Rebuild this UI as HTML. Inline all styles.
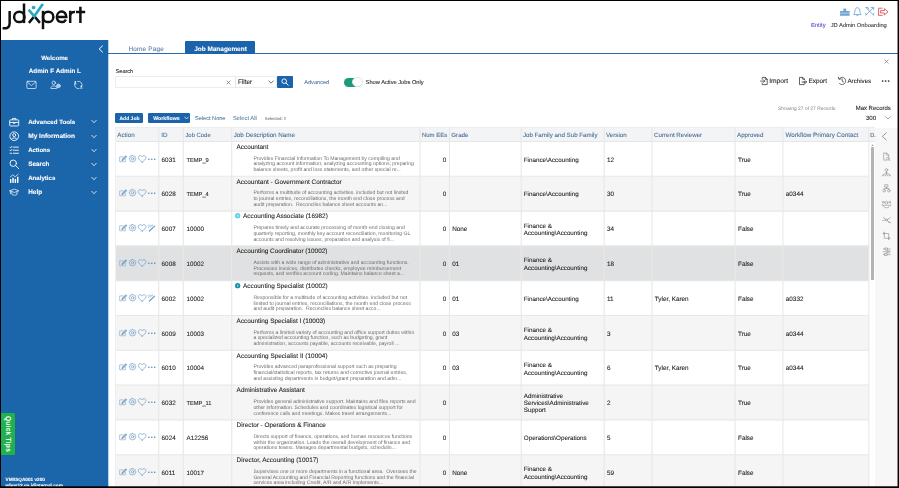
<!DOCTYPE html>
<html><head><meta charset="utf-8"><title>JDXpert - Job Management</title>
<style>
*{box-sizing:border-box;margin:0;padding:0}
html,body{width:899px;height:488px;overflow:hidden;background:#fff;font-family:"Liberation Sans",sans-serif;color:#222}
#app{position:absolute;left:0;top:0;width:899px;height:488px;overflow:hidden;background:#fff}
.t{position:absolute;white-space:nowrap;line-height:1;display:block}
#bt,#bl,#br,#bb{position:absolute;background:#000;z-index:50}
#bt{left:0;top:0;width:899px;height:1px}
#bl{left:0;top:0;width:1px;height:488px}
#br{left:898px;top:0;width:1px;height:488px}
#br2{position:absolute;z-index:50;left:897px;top:0;width:1px;height:488px;background:rgba(0,0,0,.45)}
#bb{left:0;top:487px;width:899px;height:1px}
#bb2{position:absolute;z-index:50;left:0;top:486px;width:899px;height:1px;background:rgba(0,0,0,.72)}
#side{position:absolute;left:1px;top:40px;width:107px;height:448px;background:#1b65ab}
#sideaa{position:absolute;left:108px;top:40px;width:1px;height:448px;background:#1b65ab;opacity:.3}
.mi{position:absolute;overflow:visible}
#qt{position:absolute;left:0.3px;top:373px;width:13.5px;height:42px;background:#22b04c;border-radius:0 1px 1px 0}
#qt span{position:absolute;left:6.9px;top:21px;transform:translate(-50%,-50%) rotate(90deg);color:#fff;font-weight:bold;font-size:6.6px;white-space:nowrap;line-height:1;letter-spacing:0.25px}
#tabline{position:absolute;left:108px;top:53px;width:790px;height:1px;background:#2b6cb0}
#jm{position:absolute;left:185.4px;top:41.1px;width:70px;height:12.6px;background:#1b63aa;border-radius:1px 1px 0 0}
.btn{position:absolute;background:#1b63aa;border-radius:1.2px}
#sbox{position:absolute;left:115.3px;top:75.7px;width:161.4px;height:12.1px;border:1px solid #ececec;border-radius:1px;background:#fff}
#sbox i{position:absolute;left:119px;top:0;width:0.6px;height:11px;background:#e4e4e4}
#sbtn{position:absolute;left:277px;top:75.7px;width:15.7px;height:12.3px;background:#1b63aa;border-radius:1px}
#tog{position:absolute;left:343.8px;top:77.6px;width:18.3px;height:9.3px;border-radius:4.7px;background:#1b9a7c}
#tog i{position:absolute;left:8.7px;top:-0.4px;width:10.1px;height:10.1px;border-radius:50%;background:#fff;border:0.7px solid #dfe6e4}
#hdr{position:absolute;left:115.3px;top:126.9px;width:760.1px;height:15px;background:#f3f4f6;border-top:1px solid #ececec;border-bottom:1px solid #e6e6e6}
.vs{position:absolute;top:0;bottom:0;width:1px;background:#eaeaea}
#rows{position:absolute;left:115.3px;top:0;width:753.7px;height:488px}
.row{position:absolute;left:0;width:753.9px;overflow:hidden}
#grid{position:absolute;left:0;top:126.9px;z-index:3}
.ai{position:absolute;overflow:visible}
.dot{position:absolute;width:4.4px;height:4.4px;border-radius:50%}
#tl{position:absolute;left:115px;top:126.9px;width:1px;height:362px;background:#efefef}
#scroll{position:absolute;left:869.8px;top:141.7px;width:5.6px;height:346px;background:#fff}
#scroll i{position:absolute;left:1.1px;top:5.6px;width:3.2px;height:132.3px;background:#b4b4b4;border-radius:0.5px}
#rp{position:absolute;left:875.4px;top:127.5px;width:22.4px;height:361px;background:#f7f7f7}
svg{display:block}
#txt{position:absolute;left:0;top:0;font-family:"Liberation Sans",sans-serif;fill:#222;stroke:#222;stroke-width:0.08px;text-rendering:geometricPrecision;will-change:transform;}
</style></head><body>
<div id="app">
<svg width="0" height="0" style="position:absolute">
<defs>
<g id="acts" fill="none" stroke="#6f9cc4" stroke-width="0.7" stroke-linecap="round" stroke-linejoin="round">
 <path d="M4.3 1.9 H0.65 V6.75 H6.4 V4.3" stroke="#8fb0cc"/><path d="M2.9 5.4 L3.3 4.1 L6.9 0.8 L7.8 1.7 L4.3 5.0 Z" stroke="#5f92c2" fill="#5f92c2" fill-opacity=".6"/>
 <path d="M13.22 0.37 L13.88 0.37 L14.35 1.12 L14.85 1.32 L15.71 1.12 L16.18 1.59 L15.98 2.45 L16.18 2.95 L16.93 3.42 L16.93 4.08 L16.18 4.55 L15.98 5.05 L16.18 5.91 L15.71 6.38 L14.85 6.18 L14.35 6.38 L13.88 7.13 L13.22 7.13 L12.75 6.38 L12.25 6.18 L11.39 6.38 L10.92 5.91 L11.12 5.05 L10.92 4.55 L10.17 4.08 L10.17 3.42 L10.92 2.95 L11.12 2.45 L10.92 1.59 L11.39 1.12 L12.25 1.32 L12.75 1.12 Z"/><circle cx="13.55" cy="3.75" r="1.2"/>
 <path d="M23.15 7.15 C21.2 5.6 19.35 4.3 19.35 2.6 C19.35 1.4 20.3 0.65 21.25 0.65 C22.05 0.65 22.8 1.1 23.15 1.8 C23.5 1.1 24.25 0.65 25.05 0.65 C26 0.65 26.95 1.4 26.95 2.6 C26.95 4.3 25.1 5.6 23.15 7.15 Z"/>
</g>
<g id="dots" fill="#4f7fae"><circle cx="29.9" cy="4.3" r="0.75"/><circle cx="32.8" cy="4.3" r="0.75"/><circle cx="35.7" cy="4.3" r="0.75"/></g>
<g id="act4" fill="none" stroke="#6f9cc4" stroke-linecap="round" stroke-linejoin="round">
 <path d="M30.4 7 L35.7 2.1" stroke-width="1.2"/><path d="M29 1.4 L30.6 3 M30.4 0.9 L31.6 2.4 M32 1 L32.6 2 M33.4 0.9 L33.2 1.9 M29.2 3.2 L30 3.8" stroke-width="0.6"/>
</g>
<g id="ic-brief" fill="none" stroke="#fff" stroke-width="1.85" stroke-linejoin="round"><rect x="1.5" y="6" width="19" height="13" rx="1.5"/><path d="M7.5 6 V3 H14.5 V6 M1.5 11.5 H20.5 M9.5 11.5 V13.5 H12.5 V11.5"/></g>
<g id="ic-user" fill="none" stroke="#fff" stroke-width="1.85"><circle cx="11" cy="11" r="9.2"/><circle cx="11" cy="8.6" r="3.2"/><path d="M5 17.6 C6 13.5 16 13.5 17 17.6"/></g>
<g id="ic-list" fill="none" stroke="#fff" stroke-width="1.85" stroke-linecap="round"><path d="M9 4.5 H20 M9 11 H20 M9 17.5 H20 M2 4.5 L3.5 6 L6 3 M2 11 L3.5 12.5 L6 9.5 M2.5 17.5 H5.5"/></g>
<g id="ic-search" fill="none" stroke="#fff" stroke-width="1.9" stroke-linecap="round"><circle cx="9" cy="9" r="6.8"/><path d="M14 14 L20.5 20.5"/></g>
<g id="ic-chart" fill="#fff" stroke="none"><rect x="2" y="13" width="3" height="8"/><rect x="7" y="10" width="3" height="11"/><rect x="12" y="12.5" width="3" height="8.5"/><rect x="17" y="8" width="3" height="13"/><path d="M2 9 L8 4 L13 8 L20 2" fill="none" stroke="#fff" stroke-width="1.5" stroke-linejoin="round"/></g>
<g id="ic-help" fill="none" stroke="#fff" stroke-width="1.5" stroke-linejoin="round"><path d="M1 8 L11.5 4.5 L21 8 L11.5 11.5 Z M6 10 V15.5 C8 18 15 18 17 15.5 V10 M3 9 V15"/></g>
</defs></svg>

<!-- logo -->
<svg style="position:absolute;left:0;top:0" width="90" height="36" viewBox="0 0 90 36">
 <g fill="none" stroke="#111" stroke-width="2.5">
  <path d="M9.65 11 V23.6 C9.65 27.6 6.8 28.8 2.6 28.1"/>
  <circle cx="19.3" cy="16.9" r="5.2"/><path d="M24 3.5 V23.1"/>
  <path d="M43 10.8 V29.2"/><circle cx="48.2" cy="16.9" r="5.2"/>
  <path d="M57.2 17 H66.3 C66.3 9.4 56.9 10.2 56.9 16.9 C56.9 22.6 63.6 23.6 66 19.6"/>
  <path d="M70.2 10.8 V23.1 M70.2 16 C70.2 12.8 72.5 11.6 75 12"/>
  <path d="M80.4 6.8 V23.1 M76 12 H85.2"/>
  <path d="M28.9 22.9 L34.4 16.2 L39.9 22.9" stroke-width="2.5"/>
 </g>
 <path d="M28.6 9.6 L34.3 16.3 L42.8 3.9" fill="none" stroke="#2aa9c0" stroke-width="2.7"/>
 <circle cx="33.6" cy="7.5" r="1.85" fill="#2aa9c0"/>
</svg>

<!-- top right -->
<svg style="position:absolute;left:838px;top:6px" width="52" height="12" viewBox="0 0 52 12">
 <g fill="#6fa3d4"><rect x="2" y="5" width="9.6" height="4.8" rx="0.4"/><rect x="5.4" y="2.6" width="2.8" height="2.4"/></g>
 <path d="M2 7.2 H11.6" stroke="#fff" stroke-width="0.5"/>
 <g fill="none" stroke="#6fa3d4" stroke-width="0.85" stroke-linejoin="round" stroke-linecap="round">
  <path d="M16 8.3 C17 7.2 16.6 5.4 17.1 3.9 C17.6 2.4 18.5 1.6 19.4 1.6 C20.3 1.6 21.2 2.4 21.7 3.9 C22.2 5.4 21.8 7.2 22.8 8.3 Z M18.5 9.2 C18.8 10 20 10 20.3 9.2"/>
  <path d="M28 1.6 L35.4 9 M35.4 1.6 L28 9 M28 1.6 L30 1.4 L30.4 3.2 M33.2 1.4 L35.6 1.4 L35.6 3.6 M28 9 L27.6 7.4 M35.4 9 L35.8 7.4"/>
 </g>
 <g fill="none" stroke="#e0525a" stroke-width="0.9" stroke-linejoin="round" stroke-linecap="round">
  <path d="M44 2.2 H40.6 V9.4 H44"/><path d="M43 4.6 H46.4 V2.6 L50 5.8 L46.4 9 V7 H43 Z"/>
 </g>
</svg>


<!-- sidebar -->
<div id="sideaa"></div>
<div id="side">
 <svg class="mi" style="left:96.8px;top:4.6px" width="6" height="8" viewBox="0 0 6 8"><path d="M4.8 0.6 L1.2 4 L4.8 7.4" fill="none" stroke="#fff" stroke-width="1"/></svg>
 
 <svg class="mi" style="left:24.5px;top:40.2px" width="60" height="10" viewBox="0 0 60 10" fill="none" stroke="#dbe9f6" stroke-width="0.8" stroke-linejoin="round" stroke-linecap="round">
  <rect x="0.9" y="1.3" width="9.2" height="7.2" rx="0.9"/><path d="M1.1 1.8 L5.5 5.6 L9.9 1.8"/>
  <circle cx="27.75" cy="2.8" r="1.7"/><path d="M24.8 8.1 C24.8 5 30.7 5 30.7 8.1 Z"/><circle cx="32.4" cy="5.9" r="1.8" fill="#9fc0e2" stroke="#dbe9f6"/>
  <path d="M51.76 1.36 A3.7 3.7 0 0 1 55.88 6.27 M53.04 8.64 A3.7 3.7 0 0 1 48.92 3.73"/>
  <g fill="#dbe9f6" stroke="none"><circle cx="49.3" cy="2" r="0.9"/><path d="M47.9 4.2 C47.9 2.8 50.7 2.8 50.7 4.2 Z"/><circle cx="55.3" cy="6.3" r="0.9"/><path d="M53.9 8.5 C53.9 7.1 56.7 7.1 56.7 8.5 Z"/></g>
 </svg>
 <svg class="mi" style="left:7.9px;top:76.6px" width="10.4" height="10.4" viewBox="0 0 22 22"><use href="#ic-brief"/></svg><svg class="mi" style="left:90.0px;top:79.4px" width="6" height="5" viewBox="0 0 12 10"><path d="M1 2 L6 7.5 L11 2" fill="none" stroke="#fff" stroke-width="1.5"/></svg><svg class="mi" style="left:7.9px;top:90.7px" width="10.4" height="10.4" viewBox="0 0 22 22"><use href="#ic-user"/></svg><svg class="mi" style="left:90.0px;top:93.5px" width="6" height="5" viewBox="0 0 12 10"><path d="M1 2 L6 7.5 L11 2" fill="none" stroke="#fff" stroke-width="1.5"/></svg><svg class="mi" style="left:7.9px;top:104.7px" width="10.4" height="10.4" viewBox="0 0 22 22"><use href="#ic-list"/></svg><svg class="mi" style="left:90.0px;top:107.5px" width="6" height="5" viewBox="0 0 12 10"><path d="M1 2 L6 7.5 L11 2" fill="none" stroke="#fff" stroke-width="1.5"/></svg><svg class="mi" style="left:7.9px;top:118.8px" width="10.4" height="10.4" viewBox="0 0 22 22"><use href="#ic-search"/></svg><svg class="mi" style="left:90.0px;top:121.6px" width="6" height="5" viewBox="0 0 12 10"><path d="M1 2 L6 7.5 L11 2" fill="none" stroke="#fff" stroke-width="1.5"/></svg><svg class="mi" style="left:7.9px;top:132.9px" width="10.4" height="10.4" viewBox="0 0 22 22"><use href="#ic-chart"/></svg><svg class="mi" style="left:90.0px;top:135.7px" width="6" height="5" viewBox="0 0 12 10"><path d="M1 2 L6 7.5 L11 2" fill="none" stroke="#fff" stroke-width="1.5"/></svg><svg class="mi" style="left:7.9px;top:146.9px" width="10.4" height="10.4" viewBox="0 0 22 22"><use href="#ic-help"/></svg><svg class="mi" style="left:90.0px;top:149.7px" width="6" height="5" viewBox="0 0 12 10"><path d="M1 2 L6 7.5 L11 2" fill="none" stroke="#fff" stroke-width="1.5"/></svg>
 <div id="qt"><span>Quick Tips</span></div>
 
</div>

<!-- tabs -->
<div id="tabline"></div>

<div id="jm"></div>
<svg style="position:absolute;left:884.2px;top:58.6px" width="5" height="5" viewBox="0 0 5 5"><path d="M0.5 0.5 L4.5 4.5 M4.5 0.5 L0.5 4.5" stroke="#666" stroke-width="0.6"/></svg>

<!-- toolbar -->
<div id="sbox"><i></i>
 <svg style="position:absolute;left:109.8px;top:3.4px" width="5" height="5" viewBox="0 0 5 5"><path d="M0.6 0.6 L4.4 4.4 M4.4 0.6 L0.6 4.4" stroke="#555" stroke-width="0.6"/></svg>
 <svg style="position:absolute;left:151.6px;top:3.6px" width="6" height="4" viewBox="0 0 6 4"><path d="M0.5 0.6 L3 3.2 L5.5 0.6" fill="none" stroke="#333" stroke-width="0.7"/></svg>
</div>
<div id="sbtn"><svg style="position:absolute;left:4.2px;top:2.4px" width="8" height="8" viewBox="0 0 8 8"><circle cx="3.2" cy="3.2" r="2.3" fill="none" stroke="#fff" stroke-width="0.9"/><path d="M5 5 L7.2 7.2" stroke="#fff" stroke-width="1" stroke-linecap="round"/></svg></div>
<div id="tog"><i></i></div>
<svg style="position:absolute;left:759px;top:76px" width="135" height="10" viewBox="0 0 135 10" fill="none" stroke="#3c3c3c" stroke-width="0.8" stroke-linejoin="round" stroke-linecap="round">
 <path d="M3.2 3.2 V1.4 H6.4 L8.2 3.2 V8.6 H3.2 V7 M6.3 1.4 V3.3 H8.2 M1.5 5.1 H5.8 M4.5 3.8 L5.8 5.1 L4.5 6.4"/>
 <path d="M45.2 5.4 V8.6 H40.5 V1.4 H43.8 L45.5 3.1 V3.6 M43.7 1.4 V3.2 H45.5 M43 6 H47.6 M46.3 4.7 L47.6 6 L46.3 7.3" />
 <path d="M80.2 3 C81.6 0.4 86 0.6 86.6 4.4 C87 8 83 9.8 80.6 7.6 M79.4 1.2 L80 3.2 L82 2.8 M83.2 3 V5.2 L84.6 6"/>
 <g fill="#222" stroke="none"><circle cx="123.6" cy="5" r="0.85"/><circle cx="126.6" cy="5" r="0.85"/><circle cx="129.6" cy="5" r="0.85"/></g>
</svg>
<svg style="position:absolute;left:884.6px;top:116px" width="6" height="4" viewBox="0 0 6 4"><path d="M0.5 0.6 L3 3 L5.5 0.6" fill="none" stroke="#666" stroke-width="0.6"/></svg>

<div class="btn" style="left:115.3px;top:112.6px;width:27.9px;height:10.2px"></div><div class="btn" style="left:148.2px;top:112.6px;width:41.7px;height:10.2px"><svg style="position:absolute;left:35.6px;top:3.9px" width="5" height="4" viewBox="0 0 10 8"><path d="M1 1.5 L5 6 L9 1.5" fill="none" stroke="#fff" stroke-width="1.4"/></svg></div>

<!-- grid -->
<div id="rows">
<div class="row" style="top:141.9px;height:34.8px;background:#fff"><svg class="ai" style="left:3.5px;top:12.7px" width="36" height="9" viewBox="0 0 36 9"><use href="#acts"/><use href="#dots"/></svg></div>
<div class="row" style="top:176.7px;height:34.8px;background:#f5f5f5"><svg class="ai" style="left:3.5px;top:12.7px" width="36" height="9" viewBox="0 0 36 9"><use href="#acts"/><use href="#dots"/></svg></div>
<div class="row" style="top:211.5px;height:34.8px;background:#fff"><svg class="ai" style="left:3.5px;top:12.7px" width="36" height="9" viewBox="0 0 36 9"><use href="#acts"/><use href="#act4"/></svg><svg class="ai" style="left:119.65px;top:1.8px" width="5.3" height="5.3" viewBox="0 0 5.3 5.3"><circle cx="2.65" cy="2.65" r="2.65" fill="#5fd0e6"/><circle cx="2.65" cy="2.65" r="1.1" fill="#a5e6f2"/></svg></div>
<div class="row" style="top:246.3px;height:34.8px;background:#e0e1e2"><svg class="ai" style="left:3.5px;top:12.7px" width="36" height="9" viewBox="0 0 36 9"><use href="#acts"/><use href="#dots"/></svg></div>
<div class="row" style="top:281.1px;height:34.8px;background:#fff"><svg class="ai" style="left:3.5px;top:12.7px" width="36" height="9" viewBox="0 0 36 9"><use href="#acts"/><use href="#act4"/></svg><svg class="ai" style="left:119.65px;top:1.8px" width="5.3" height="5.3" viewBox="0 0 5.3 5.3"><circle cx="2.65" cy="2.65" r="2.65" fill="#1e8fa8"/><path d="M2 1.4 L3.9 2.65 L2 3.9 Z" fill="#8fd6ee"/></svg></div>
<div class="row" style="top:315.9px;height:34.8px;background:#f5f5f5"><svg class="ai" style="left:3.5px;top:12.7px" width="36" height="9" viewBox="0 0 36 9"><use href="#acts"/><use href="#dots"/></svg></div>
<div class="row" style="top:350.7px;height:34.8px;background:#fff"><svg class="ai" style="left:3.5px;top:12.7px" width="36" height="9" viewBox="0 0 36 9"><use href="#acts"/><use href="#dots"/></svg></div>
<div class="row" style="top:385.5px;height:34.8px;background:#f5f5f5"><svg class="ai" style="left:3.5px;top:12.7px" width="36" height="9" viewBox="0 0 36 9"><use href="#acts"/><use href="#dots"/></svg></div>
<div class="row" style="top:420.3px;height:34.8px;background:#fff"><svg class="ai" style="left:3.5px;top:12.7px" width="36" height="9" viewBox="0 0 36 9"><use href="#acts"/><use href="#dots"/></svg></div>
<div class="row" style="top:455.1px;height:34.8px;background:#f5f5f5"><svg class="ai" style="left:3.5px;top:12.7px" width="36" height="9" viewBox="0 0 36 9"><use href="#acts"/><use href="#dots"/></svg></div><svg id="grid" width="760" height="362" viewBox="115.3 126.9 760 362" fill="none" stroke="#e8e8e8" stroke-width="1.1"><path d="M159.10 127V488M183.60 127V488M232.00 127V488M420.30 127V488M449.75 127V488M521.50 127V488M604.50 127V488M652.30 127V488M735.40 127V488M783.20 127V488M869.20 127V488M115.3 176.20H869.2M115.3 211.00H869.2M115.3 245.80H869.2M115.3 280.60H869.2M115.3 315.40H869.2M115.3 350.20H869.2M115.3 385.00H869.2M115.3 419.80H869.2M115.3 454.60H869.2M115.3 489.40H869.2"/></svg>
</div>
<div id="hdr"></div>
<div id="tl"></div>
<div id="scroll"><i></i><svg style="position:absolute;left:1.2px;top:2.2px" width="3" height="2.4" viewBox="0 0 3 2.4"><path d="M0.2 2.2 L1.5 0.3 L2.8 2.2 Z" fill="#9a9a9a"/></svg></div>
<div id="rp">
 <svg style="position:absolute;left:0;top:0" width="22.4" height="140" viewBox="0 0 22.4 140" fill="none" stroke="#959595" stroke-width="0.65" stroke-linejoin="round" stroke-linecap="round">
  <path d="M11.3 4.9 L7.3 8.4 L11.3 11.9" stroke="#777" stroke-width="0.75"/>
  <g transform="translate(0.3,28.7)"><path d="M8.4 -3.6 H11.6 L13.4 -1.8 V0.4 M11.4 -3.6 V-1.6 H13.4 M8.4 -3.6 V3.4 H11"/><circle cx="12.6" cy="2" r="1.4"/><path d="M13.6 3 L14.6 4"/></g>
  <g transform="translate(0.3,44.4)"><circle cx="11.2" cy="-2.5" r="1.3"/><path d="M11.2 -1.2 V1 M11.2 -0.2 L7.6 2.8 M11.2 -0.2 L14.8 2.8 M7.2 3.6 L7.6 2.4 L8.8 2.8 M15.2 3.6 L14.8 2.4 L13.6 2.8 M11.2 1 L10 3.6 M11.2 1 L12.4 3.6"/></g>
  <g transform="translate(0.3,60.3)"><rect x="9.8" y="-3.6" width="2.8" height="2.4"/><circle cx="8.8" cy="2.4" r="1.3"/><circle cx="13.6" cy="2.4" r="1.3"/><path d="M11.2 -1.2 V0.2 M8.8 1 V0.2 H13.6 V1"/></g>
  <g transform="translate(0.3,76.2)"><circle cx="11.2" cy="-1.6" r="1.3"/><circle cx="8" cy="-2" r="0.9"/><circle cx="14.4" cy="-2" r="0.9"/><path d="M8.6 1 H13.8 V2.6 C13 4 9.4 4 8.6 2.6 Z M7 0.2 V1.6 M15.4 0.2 V1.6"/></g>
  <g transform="translate(0.3,91.9)"><circle cx="11.2" cy="0" r="1"/><path d="M8 -2.6 L10.4 -0.6 M12 0.6 L14.6 2.8 M14.8 -2 L12.2 -0.4 M7.6 0.6 L10.2 0.2 M13 2.2 L15.2 2.6"/></g>
  <g transform="translate(0.3,107.9)"><path d="M9 -3.6 V2.4 H14.6 M13.4 3.6 V-2.4 H7.8 M13.2 1.2 L14.6 2.4 L13.2 3.6 M9.2 -1.2 L7.8 -2.4 L9.2 -3.6"/></g>
  <g transform="translate(0.3,123.8)"><path d="M8 -2.8 H10 M12.4 -2.8 H15 M8 0 H12 M14 0 H15 M8 2.8 H9.6 M12 2.8 H15"/><rect x="10" y="-3.8" width="2.2" height="2"/><rect x="12" y="-1" width="2" height="2"/><rect x="9.6" y="1.8" width="2.2" height="2"/></g>
 </svg>
</div>

<svg id="txt" width="899" height="488" viewBox="0 0 899 488">
<text x="161.6" y="162" font-size="6.35">6031</text>
<text x="186.5" y="162" font-size="5.72">TEMP_9</text>
<text x="236.6" y="149" font-size="6.40" textLength="31.7">Accountant</text>
<text x="253.4" y="160" font-size="5.12" fill="#6e6e6e" stroke="none">Provides Financial Information To Management by compiling and</text>
<text x="253.4" y="165" font-size="5.12" fill="#6e6e6e" stroke="none">analyzing account information; analyzing accounting options; preparing</text>
<text x="253.4" y="171" font-size="5.12" fill="#6e6e6e" stroke="none">balance sheets, profit and loss statements, and other special re...</text>
<text x="446.3" y="162" font-size="6.35" text-anchor="end">0</text>
<text x="523.8" y="162" font-size="6.26">Finance\Accounting</text>
<text x="607.0" y="162" font-size="6.35">12</text>
<text x="738.0" y="162" font-size="6.35">True</text>
<text x="161.6" y="196" font-size="6.35">6028</text>
<text x="186.5" y="196" font-size="5.72">TEMP_4</text>
<text x="236.6" y="184" font-size="6.40" textLength="105">Accountant - Government Contractor</text>
<text x="253.4" y="194" font-size="5.12" fill="#6e6e6e" stroke="none">Performs a multitude of accounting activities. included but not limited</text>
<text x="253.4" y="200" font-size="5.12" fill="#6e6e6e" stroke="none">to journal entries, reconciliations, the month end close process and</text>
<text x="253.4" y="206" font-size="5.12" fill="#6e6e6e" stroke="none">audit preparation.&#160; Reconciles balance sheet accounts an...</text>
<text x="446.3" y="196" font-size="6.35" text-anchor="end">0</text>
<text x="523.8" y="196" font-size="6.26">Finance\Accounting</text>
<text x="607.0" y="196" font-size="6.35">30</text>
<text x="738.0" y="196" font-size="6.35">True</text>
<text x="785.8" y="196" font-size="6.35">a0344</text>
<text x="161.6" y="231" font-size="6.35">6007</text>
<text x="186.5" y="231" font-size="6.30">10000</text>
<text x="243.1" y="218" font-size="6.40" textLength="84.7">Accounting Associate (16982)</text>
<text x="253.4" y="229" font-size="5.12" fill="#6e6e6e" stroke="none">Prepares timely and accurate processing of month-end closing and</text>
<text x="253.4" y="235" font-size="5.12" fill="#6e6e6e" stroke="none">quarterly reporting, monthly key account reconciliation, monitoring GL</text>
<text x="253.4" y="241" font-size="5.12" fill="#6e6e6e" stroke="none">accounts and resolving issues, preparation and analysis of fi...</text>
<text x="446.3" y="231" font-size="6.35" text-anchor="end">0</text>
<text x="452.2" y="231" font-size="6.35">None</text>
<text x="523.8" y="228" font-size="6.26">Finance &amp;</text>
<text x="523.8" y="235" font-size="6.26">Accounting\Accounting</text>
<text x="607.0" y="231" font-size="6.35">34</text>
<text x="738.0" y="231" font-size="6.35">False</text>
<text x="161.6" y="266" font-size="6.35">6008</text>
<text x="186.5" y="266" font-size="6.30">10002</text>
<text x="236.6" y="253" font-size="6.40" textLength="90.8">Accounting Coordinator (10002)</text>
<text x="253.4" y="264" font-size="5.12" fill="#6e6e6e" stroke="none">Assists with a wide range of administrative and accounting functions.</text>
<text x="253.4" y="270" font-size="5.12" fill="#6e6e6e" stroke="none">Processes invoices, distributes checks, employee reimbursement</text>
<text x="253.4" y="275" font-size="5.12" fill="#6e6e6e" stroke="none">requests, and verifies account coding. Maintains balance sheet a...</text>
<text x="446.3" y="266" font-size="6.35" text-anchor="end">0</text>
<text x="452.2" y="266" font-size="6.35">01</text>
<text x="523.8" y="262" font-size="6.26">Finance &amp;</text>
<text x="523.8" y="270" font-size="6.26">Accounting\Accounting</text>
<text x="607.0" y="266" font-size="6.35">18</text>
<text x="738.0" y="266" font-size="6.35">False</text>
<text x="161.6" y="301" font-size="6.35">6002</text>
<text x="186.5" y="301" font-size="6.30">10002</text>
<text x="243.1" y="288" font-size="6.40" textLength="84.6">Accounting Specialist (10002)</text>
<text x="253.4" y="299" font-size="5.12" fill="#6e6e6e" stroke="none">Responsible for a multitude of accounting activities. included but not</text>
<text x="253.4" y="305" font-size="5.12" fill="#6e6e6e" stroke="none">limited to journal entries, reconciliations, the month end close process</text>
<text x="253.4" y="310" font-size="5.12" fill="#6e6e6e" stroke="none">and audit preparation.&#160; Reconciles balance sheet acco...</text>
<text x="446.3" y="301" font-size="6.35" text-anchor="end">0</text>
<text x="452.2" y="301" font-size="6.35">01</text>
<text x="523.8" y="301" font-size="6.26">Finance\Accounting</text>
<text x="607.0" y="301" font-size="6.35">11</text>
<text x="654.8" y="301" font-size="6.35">Tyler, Karen</text>
<text x="738.0" y="301" font-size="6.35">False</text>
<text x="785.8" y="301" font-size="6.35">a0332</text>
<text x="161.6" y="336" font-size="6.35">6009</text>
<text x="186.5" y="336" font-size="6.30">10003</text>
<text x="236.6" y="323" font-size="6.40" textLength="88.6">Accounting Specialist I (10003)</text>
<text x="253.4" y="334" font-size="5.12" fill="#6e6e6e" stroke="none">Performs a limited variety of accounting and office support duties within</text>
<text x="253.4" y="339" font-size="5.12" fill="#6e6e6e" stroke="none">a specialized accounting function, such as budgeting, grant</text>
<text x="253.4" y="345" font-size="5.12" fill="#6e6e6e" stroke="none">administration, accounts payable, accounts receivable, payroll ...</text>
<text x="446.3" y="336" font-size="6.35" text-anchor="end">0</text>
<text x="452.2" y="336" font-size="6.35">03</text>
<text x="523.8" y="332" font-size="6.26">Finance &amp;</text>
<text x="523.8" y="340" font-size="6.26">Accounting\Accounting</text>
<text x="607.0" y="336" font-size="6.35">3</text>
<text x="738.0" y="336" font-size="6.35">True</text>
<text x="785.8" y="336" font-size="6.35">a0344</text>
<text x="161.6" y="370" font-size="6.35">6010</text>
<text x="186.5" y="370" font-size="6.30">10004</text>
<text x="236.6" y="358" font-size="6.40" textLength="91.0">Accounting Specialist II (10004)</text>
<text x="253.4" y="368" font-size="5.12" fill="#6e6e6e" stroke="none">Provides advanced paraprofessional support such as preparing</text>
<text x="253.4" y="374" font-size="5.12" fill="#6e6e6e" stroke="none">financial/statistical reports, tax returns and corrective journal entries,</text>
<text x="253.4" y="380" font-size="5.12" fill="#6e6e6e" stroke="none">and assisting departments in budget/grant preparation and adm...</text>
<text x="446.3" y="370" font-size="6.35" text-anchor="end">0</text>
<text x="452.2" y="370" font-size="6.35">03</text>
<text x="523.8" y="367" font-size="6.26">Finance &amp;</text>
<text x="523.8" y="375" font-size="6.26">Accounting\Accounting</text>
<text x="607.0" y="370" font-size="6.35">6</text>
<text x="654.8" y="370" font-size="6.35">Tyler, Karen</text>
<text x="738.0" y="370" font-size="6.35">True</text>
<text x="785.8" y="370" font-size="6.35">a0344</text>
<text x="161.6" y="405" font-size="6.35">6032</text>
<text x="186.5" y="405" font-size="5.72">TEMP_11</text>
<text x="236.6" y="392" font-size="6.40" textLength="68.3">Administrative Assistant</text>
<text x="253.4" y="403" font-size="5.12" fill="#6e6e6e" stroke="none">Provides general administrative support. Maintains and files reports and</text>
<text x="253.4" y="409" font-size="5.12" fill="#6e6e6e" stroke="none">other information. Schedules and coordinates logistical support for</text>
<text x="253.4" y="415" font-size="5.12" fill="#6e6e6e" stroke="none">conference calls and meetings. Makes travel arrangements...</text>
<text x="446.3" y="405" font-size="6.35" text-anchor="end">0</text>
<text x="523.8" y="398" font-size="6.26">Administrative</text>
<text x="523.8" y="405" font-size="6.26">Services\Administrative</text>
<text x="523.8" y="412" font-size="6.26">Support</text>
<text x="607.0" y="405" font-size="6.35">2</text>
<text x="738.0" y="405" font-size="6.35">True</text>
<text x="161.6" y="440" font-size="6.35">6024</text>
<text x="186.5" y="440" font-size="6.30">A12256</text>
<text x="236.6" y="427" font-size="6.40" textLength="89.3">Director - Operations &amp; Finance</text>
<text x="253.4" y="438" font-size="5.12" fill="#6e6e6e" stroke="none">Directs support of finance, operations, and human resources functions</text>
<text x="253.4" y="444" font-size="5.12" fill="#6e6e6e" stroke="none">within the organization. Leads the overall development of finance and</text>
<text x="253.4" y="449" font-size="5.12" fill="#6e6e6e" stroke="none">operations teams. Manages departmental budgets, schedulin...</text>
<text x="446.3" y="440" font-size="6.35" text-anchor="end">0</text>
<text x="523.8" y="440" font-size="6.26">Operations\Operations</text>
<text x="607.0" y="440" font-size="6.35">5</text>
<text x="738.0" y="440" font-size="6.35">False</text>
<text x="161.6" y="475" font-size="6.35">6011</text>
<text x="186.5" y="475" font-size="6.30">10017</text>
<text x="236.6" y="462" font-size="6.40" textLength="81.9">Director, Accounting (10017)</text>
<text x="253.4" y="473" font-size="5.12" fill="#6e6e6e" stroke="none">Supervises one or more departments in a functional area.&#160; Oversees the</text>
<text x="253.4" y="479" font-size="5.12" fill="#6e6e6e" stroke="none">General Accounting and Financial Reporting functions and the financial</text>
<text x="253.4" y="484" font-size="5.12" fill="#6e6e6e" stroke="none">services area including Credit, A/R and A/R Implements...</text>
<text x="446.3" y="475" font-size="6.35" text-anchor="end">0</text>
<text x="452.2" y="475" font-size="6.35">None</text>
<text x="523.8" y="471" font-size="6.26">Finance &amp;</text>
<text x="523.8" y="479" font-size="6.26">Accounting\Accounting</text>
<text x="607.0" y="475" font-size="6.35">59</text>
<text x="738.0" y="475" font-size="6.35">False</text>
<text x="117.3" y="137" font-size="6.24" fill="#496b97" stroke="#496b97">Action</text>
<text x="161.2" y="137" font-size="6.24" fill="#496b97" stroke="#496b97">ID</text>
<text x="185.4" y="137" font-size="5.92" fill="#496b97" stroke="#496b97">Job Code</text>
<text x="233.7" y="137" font-size="6.22" fill="#496b97" stroke="#496b97">Job Description Name</text>
<text x="422.0" y="137" font-size="5.96" fill="#496b97" stroke="#496b97">Num EEs</text>
<text x="451.3" y="137" font-size="6.20" fill="#496b97" stroke="#496b97">Grade</text>
<text x="522.9" y="137" font-size="6.19" fill="#496b97" stroke="#496b97">Job Family and Sub Family</text>
<text x="606.0" y="137" font-size="6.20" fill="#496b97" stroke="#496b97">Version</text>
<text x="654.0" y="137" font-size="6.20" fill="#496b97" stroke="#496b97">Current Reviewer</text>
<text x="737.0" y="137" font-size="6.20" fill="#496b97" stroke="#496b97">Approved</text>
<text x="785.5" y="137" font-size="6.32" fill="#496b97" stroke="#496b97">Workflow Primary Contact</text>
<text x="870.2" y="137" font-size="5.60" fill="#5a6570" stroke="#5a6570">D.</text>
<text x="28.2" y="124" font-size="6.13" fill="#fff" stroke="#fff" font-weight="bold">Advanced Tools</text>
<text x="28.2" y="138" font-size="6.54" fill="#fff" stroke="#fff" font-weight="bold">My Information</text>
<text x="28.2" y="152" font-size="5.97" fill="#fff" stroke="#fff" font-weight="bold">Actions</text>
<text x="28.2" y="166" font-size="6.33" fill="#fff" stroke="#fff" font-weight="bold">Search</text>
<text x="28.2" y="180" font-size="6.12" fill="#fff" stroke="#fff" font-weight="bold">Analytics</text>
<text x="28.2" y="194" font-size="6.41" fill="#fff" stroke="#fff" font-weight="bold">Help</text>
<text x="41.2" y="60" font-size="6.15" fill="#fff" stroke="#fff" font-weight="bold">Welcome</text>
<text x="28.8" y="73" font-size="6.34" fill="#fff" stroke="#fff" font-weight="bold">Admin F Admin L</text>
<text x="128.5" y="51" font-size="6.40" fill="#5b7da3" stroke="#5b7da3" letter-spacing="0.2">Home Page</text>
<text x="194.2" y="51" font-size="6.45" fill="#fff" stroke="#fff" font-weight="bold">Job Management</text>
<text x="810.9" y="27" font-size="5.92" fill="#5a4fcf" stroke="#5a4fcf">Entity</text>
<text x="830.7" y="27" font-size="5.74" fill="#333" stroke="#333">JD Admin Onboarding</text>
<text x="115.6" y="73" font-size="5.55">Search</text>
<text x="238.0" y="84" font-size="6.41">Filter</text>
<text x="304.2" y="84" font-size="5.64" fill="#51749c" stroke="#51749c">Advanced</text>
<text x="365.6" y="84" font-size="5.71">Show Active Jobs Only</text>
<text x="769.2" y="83" font-size="6.67">Import</text>
<text x="808.6" y="83" font-size="6.37">Export</text>
<text x="847.5" y="83" font-size="6.18">Archives</text>
<text x="778.0" y="110" font-size="4.90" fill="#9a9a9a" stroke="#9a9a9a">Showing 27 of 27 Records</text>
<text x="855.7" y="110" font-size="5.98">Max Records</text>
<text x="865.9" y="120" font-size="6.17">300</text>
<text x="195.0" y="120" font-size="5.60" fill="#5b7da3" stroke="#5b7da3">Select None</text>
<text x="233.0" y="120" font-size="5.79" fill="#5b7da3" stroke="#5b7da3">Select All</text>
<text x="264.8" y="120" font-size="4.28" fill="#777" stroke="#777">Selected: 1</text>
<text x="119.5" y="120" font-size="5.01" fill="#fff" stroke="#fff" font-weight="bold">Add Job</text>
<text x="153.2" y="120" font-size="5.26" fill="#fff" stroke="#fff" font-weight="bold">Workflows</text>
<text x="5.5" y="481" font-size="4.70" fill="#fff" stroke="#fff" font-weight="bold">VMIISQA001 v200</text>
<text x="5.5" y="487" font-size="4.70" fill="#fff" stroke="#fff" font-weight="bold">wbgs13.qa.jdinternal.com</text>
</svg>
<div id="bt"></div><div id="bl"></div><div id="br"></div><div id="br2"></div><div id="bb2"></div><div id="bb"></div>
</div>
</body></html>
